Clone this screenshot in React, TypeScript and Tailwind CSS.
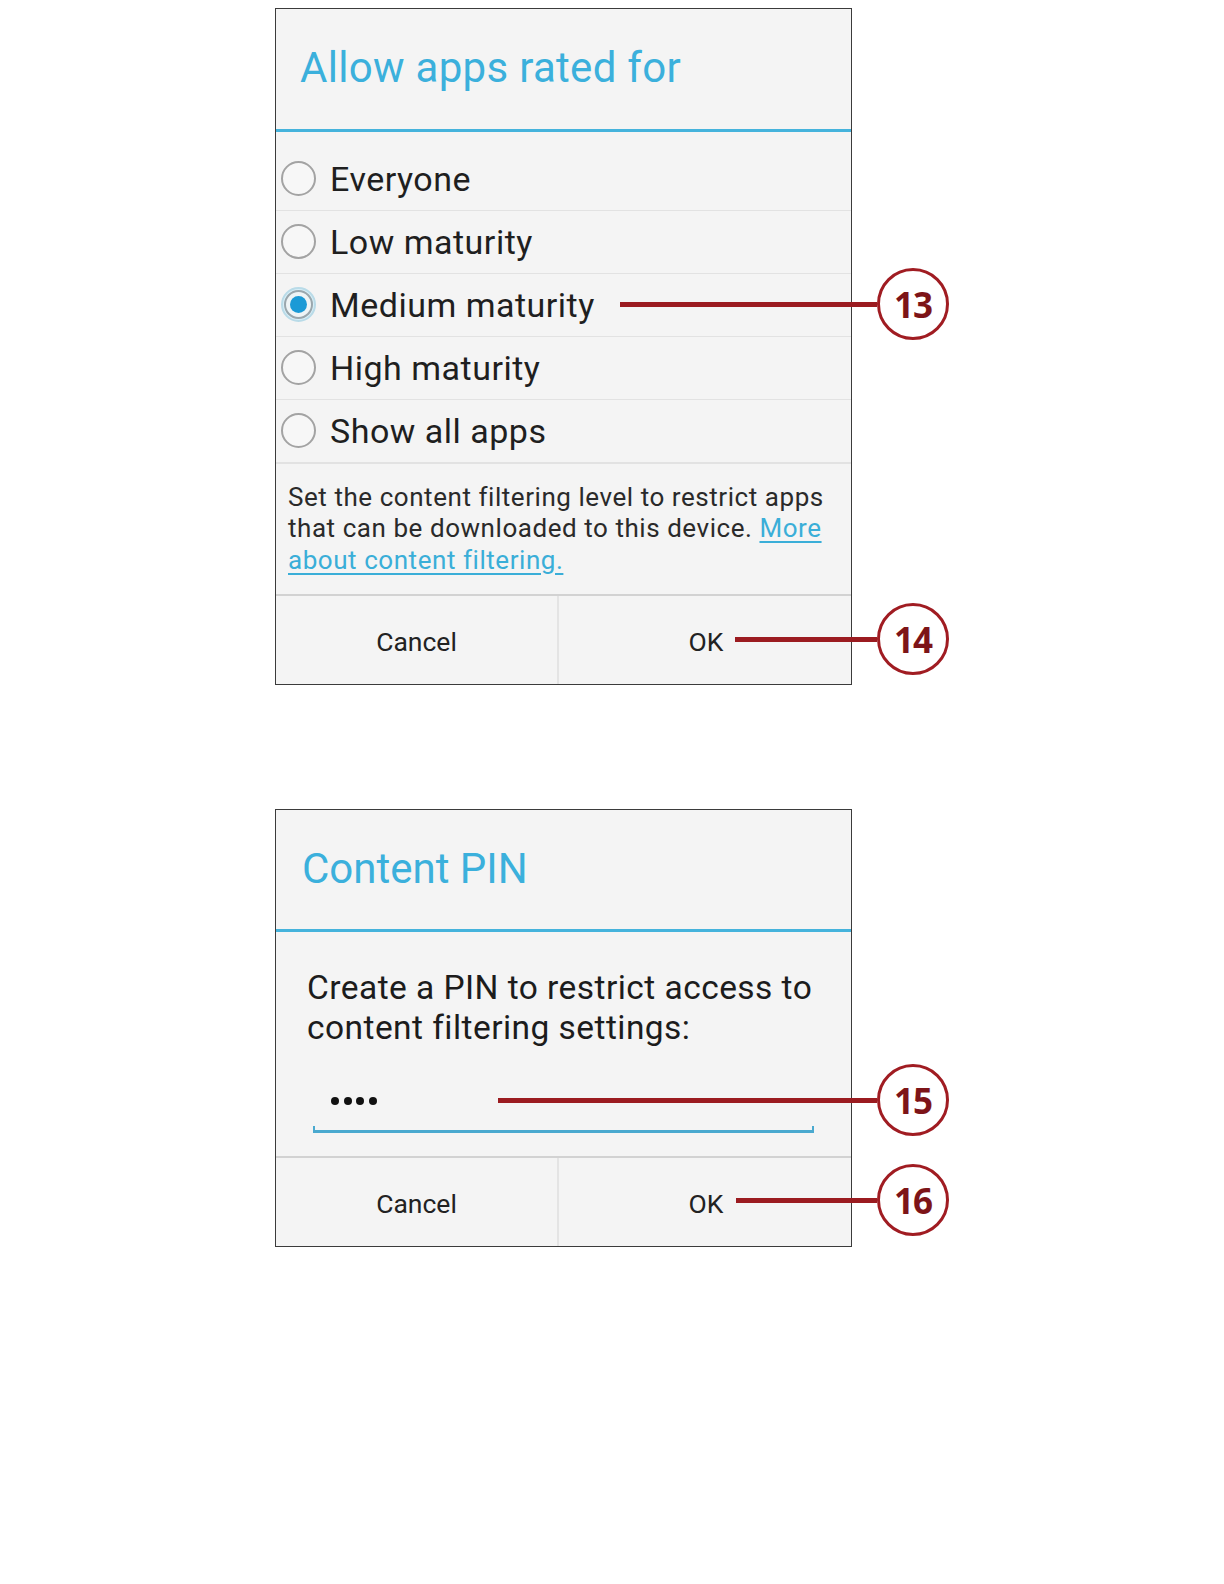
import React from "react";

function Callout({ n, className }: { n: string; className: string }) {
  return (
    <div className={`absolute flex items-center right-[-97px] h-[72px] ${className}`}>
      <div className="flex-1 h-[5px] bg-[#9b1b20]" />
      <div className="w-[72px] h-[72px] rounded-full border-[3px] border-[#a01c22] bg-white flex items-center justify-center">
        <span className="text-[35px] font-bold text-[#7d1418] leading-none tracking-[-1px] [font-family:'Open_Sans',sans-serif]">{n}</span>
      </div>
    </div>
  );
}

function Radio({ checked }: { checked?: boolean }) {
  if (checked) {
    return (
      <div className="w-[35px] h-[35px] rounded-full border-[2px] border-[#b9dbe8] bg-[#d8eef7] flex items-center justify-center">
        <div className="w-[29px] h-[29px] rounded-full border-[2px] border-[#9aa7ad] bg-[#eef4f6] flex items-center justify-center">
          <div className="w-[17px] h-[17px] rounded-full bg-[#1b9ad6]" />
        </div>
      </div>
    );
  }
  return <div className="w-[35px] h-[35px] rounded-full border-[2px] border-[#a3a3a3] bg-[#f7f7f7]" />;
}

function Row({ label, checked, last }: { label: string; checked?: boolean; last?: boolean }) {
  return (
    <div className={`h-[63px] flex items-center pl-[5px] ${last ? "" : "border-b border-[#e2e2e2]"}`}>
      <Radio checked={checked} />
      <span className="ml-[14px] text-[34px] tracking-[0.5px] text-[#1f1f1f] leading-none">{label}</span>
    </div>
  );
}

function Buttons() {
  return (
    <div className="h-[90px] flex border-t-[2px] border-[#d2d2d2]">
      <div className="w-[283px] flex items-center justify-center pt-[3px] border-r-[2px] border-[#e4e4e4] text-[26.5px] text-[#222]">
        Cancel
      </div>
      <div className="flex-1 flex items-center justify-center pt-[3px] text-[26.5px] text-[#222] pl-[2px]">OK</div>
    </div>
  );
}

export default function App() {
  return (
    <div className="w-[1224px] h-[1584px] bg-white [font-family:Roboto,'Liberation_Sans',sans-serif]">
      <div className="pl-[275px] pt-[8px] flex flex-col">
        <div className="relative w-[577px]">
          <div className="border-[1.5px] border-[#3b3b3b] bg-[#f4f4f4] h-[677px] flex flex-col">
            <div className="h-[120px] flex items-center pl-[24px] pb-[2px]">
              <span className="text-[42px] tracking-[0.3px] text-[#3bb0dc] leading-none">Allow apps rated for</span>
            </div>
            <div className="h-[3px] bg-[#45b3dc]" />
            <div className="pt-[16px]">
              <Row label="Everyone" />
              <Row label="Low maturity" />
              <Row label="Medium maturity" checked />
              <Row label="High maturity" />
              <Row label="Show all apps" />
            </div>
            <div className="border-t border-[#e2e2e2] pt-[18px] pb-[18px] pl-[12px] pr-[12px] text-[26px] tracking-[0.55px] leading-[31.5px] text-[#2a2a2a]">
              Set the content filtering level to restrict apps that can be downloaded to this device.{" "}
              <span className="text-[#3aaed8] underline underline-offset-[4px]">More about content filtering.</span>
            </div>
            <div className="mt-auto">
              <Buttons />
            </div>
          </div>
          <Callout n="13" className="top-[260px] left-[345px]" />
          <Callout n="14" className="top-[595px] left-[460px]" />
        </div>

        <div className="relative w-[577px] mt-[124px]">
          <div className="border-[1.5px] border-[#3b3b3b] bg-[#f4f4f4] h-[438px] flex flex-col">
            <div className="h-[119px] flex items-center pl-[26px] pb-[2px]">
              <span className="text-[42px] text-[#3bb0dc] leading-none">Content PIN</span>
            </div>
            <div className="h-[3px] bg-[#45b3dc]" />
            <div className="pt-[36px] pl-[31px] pr-[14px] text-[33.5px] tracking-[0.45px] leading-[40px] text-[#1c1c1c]">
              Create a PIN to restrict access to content filtering settings:
            </div>
            <div className="pl-[55px] mt-[43px] h-[20px] flex items-center gap-[4.5px]">
              <span className="w-[8px] h-[8px] rounded-full bg-[#111]" />
              <span className="w-[8px] h-[8px] rounded-full bg-[#111]" />
              <span className="w-[8px] h-[8px] rounded-full bg-[#111]" />
              <span className="w-[8px] h-[8px] rounded-full bg-[#111]" />
            </div>
            <div className="mx-[37px] mt-[15px] h-[7px] border-l-[2px] border-r-[2px] border-b-[3px] border-[#4aa9cf]" />
            <div className="mt-auto">
              <Buttons />
            </div>
          </div>
          <Callout n="15" className="top-[255px] left-[223px]" />
          <Callout n="16" className="top-[355px] left-[461px]" />
        </div>
      </div>
    </div>
  );
}
